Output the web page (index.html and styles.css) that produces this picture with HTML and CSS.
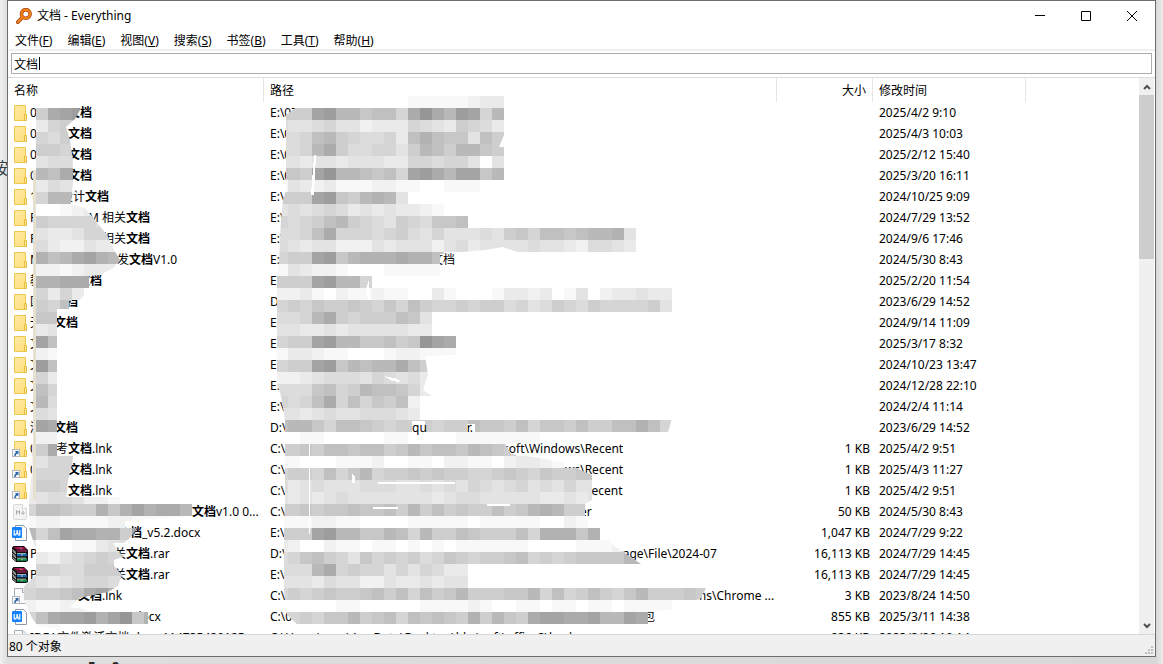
FILE: index.html
```html
<!DOCTYPE html>
<html lang="zh-CN">
<head>
<meta charset="utf-8">
<title>文档 - Everything</title>
<link rel="stylesheet" href="styles.css">
</head>
<body>
<div class="behind behind-side">按</div>
<div class="behind behind-foot">Everything</div>

<svg class="defs" aria-hidden="true">
  <defs>
    <linearGradient id="g-folder" x1="0" y1="0" x2="1" y2="1"><stop offset="0" stop-color="#ffeaa6"/><stop offset="1" stop-color="#ffdf7c"/></linearGradient>
    <symbol id="i-folder" viewBox="0 0 16 16">
      <path d="M2.500.5h11v15h-11z" fill="url(#g-folder)" stroke="#ecc84c"/>
      <path d="M12.500 15.500V9.500h2v6z" fill="#ffe699" stroke="#e6bd3d"/>
    </symbol>
    <symbol id="i-arrow" viewBox="0 0 16 16">
      <rect x=".5" y="8.500" width="7" height="7" fill="#f8fafc" stroke="#b4b8bc"/>
      <path d="M3 10h3.500v3.500L5.300 12.400Q3.800 13 3.600 15H2.200Q2 12.500 4 11.200z" fill="#2b66a8"/>
    </symbol>
    <symbol id="i-flink" viewBox="0 0 16 16"><use href="#i-folder"/><use href="#i-arrow"/></symbol>
    <symbol id="i-page" viewBox="0 0 16 16"><path d="M2.500.5h8.500l3.500 3.500v11.500h-12z" fill="#fbfbfc" stroke="#a8aeb8"/><path d="M10.500.5v4h4" fill="#eceef2" stroke="#a8aeb8"/></symbol>
    <symbol id="i-plink" viewBox="0 0 16 16"><use href="#i-page"/><use href="#i-arrow"/></symbol>
    <symbol id="i-md" viewBox="0 0 16 16">
      <path d="M2.500.5h8l4 4v10q0 1-1 1h-11q-1 0-1-1v-13q0-1 1-1z" fill="#f4f4f4" stroke="#d8d8d8"/><path d="M10.500.5v4h4" fill="#fff" stroke="#d8d8d8"/>
      <path d="M4.500 10.500v-4l1.500 2 1.500-2v4M11 6.500v3.500M9.500 8.500l1.500 2 1.500-2" fill="none" stroke="#aaa"/>
    </symbol>
    <symbol id="i-word" viewBox="0 0 16 16">
      <path d="M3.500.5h8l3 3v12h-11z" fill="#fff" stroke="#8a97ad"/><rect y="2" width="10" height="11" rx="1" fill="#1482ff"/>
      <path d="M2.200 5v4.800h1.500L5.500 7l.8 2.800h1.500V5M5 5v3" fill="none" stroke="#fff" stroke-width="1.200"/>
    </symbol>
    <symbol id="i-rar" viewBox="0 0 16 16">
      <path d="M0 1.500 1.500 0H12l4 4v11l-2 1H4L0 12.500z" fill="#101010"/>
      <path d="M1.500 1H12l2.500 2.500H4.500z" fill="#a3104f"/><path d="M5 4.500h10v1H5z" fill="#c8286e"/>
      <path d="M5 8h10v2.200H5z" fill="#1767b4"/><path d="M5 7h9v.8H5z" fill="#c4dcec"/>
      <path d="M5 12.700h10v2H5z" fill="#0a9c50"/><path d="M5 11.700h9v.8H5z" fill="#c8ecd6"/>
      <path d="M.5 3.500 4 6.500M.5 5l3.500 3M.5 7.500 4 10.500M.5 9l3.500 3M.5 11.500l3.500 3" stroke="#eee" stroke-width=".8"/>
      <path d="M7 1.500h2l2 2H9zM9 8h2v2H9zM9 12.700h2v1.500H9z" fill="#e9c9b0" opacity=".45"/>
    </symbol>
  </defs>
</svg>

<main class="window">
  <header class="titlebar">
    <svg class="logo" viewBox="0 0 16 16" aria-hidden="true">
      <path d="M6 9.800 1.800 14.200" stroke="#9c4310" stroke-width="3.800" stroke-linecap="round"/>
      <circle cx="9.800" cy="6" r="4.300" fill="none" stroke="#9c4310" stroke-width="3.600"/>
      <path d="M6 9.800 1.800 14.200" stroke="#f58220" stroke-width="2.200" stroke-linecap="round"/>
      <circle cx="9.800" cy="6" r="4.300" fill="none" stroke="#f97f10" stroke-width="2.300"/>
    </svg>
    <h1 class="title">文档 - Everything</h1>
    <div class="controls">
      <button type="button" aria-label="最小化"><svg viewBox="0 0 10 10"><path d="M0 4.500h10"/></svg></button>
      <button type="button" aria-label="最大化"><svg viewBox="0 0 10 10"><path d="M.5.5h9v9h-9z"/></svg></button>
      <button type="button" aria-label="关闭"><svg viewBox="0 0 10 10"><path d="M0 0l10 10M10 0L0 10"/></svg></button>
    </div>
  </header>
  <nav class="menu">
    <button type="button">文件(<u>F</u>)</button>
    <button type="button">编辑(<u>E</u>)</button>
    <button type="button">视图(<u>V</u>)</button>
    <button type="button">搜索(<u>S</u>)</button>
    <button type="button">书签(<u>B</u>)</button>
    <button type="button">工具(<u>T</u>)</button>
    <button type="button">帮助(<u>H</u>)</button>
  </nav>
  <div class="search">
    <input type="text" value="文档" aria-label="搜索">
    <span class="caret"></span>
  </div>
  <section class="results">
    <div class="list">
      <table class="files">
        <colgroup><col class="c-name"><col class="c-path"><col class="c-size"><col class="c-date"><col></colgroup>
        <thead><tr><th>名称</th><th>路径</th><th class="size">大小</th><th>修改时间</th><th class="rest"></th></tr></thead>
        <tbody id="rows"></tbody>
      </table>
    </div>
    <div class="scroll">
      <button type="button" aria-label="向上滚动"><svg viewBox="0 0 8 6"><path d="M1 5l3-3 3 3"/></svg></button>
      <div class="track"><div class="thumb"></div></div>
      <button type="button" aria-label="向下滚动"><svg viewBox="0 0 8 6"><path d="M1 1l3 3 3-3"/></svg></button>
    </div>
  </section>
  <footer class="status">
    <span>80 个对象</span>
    <svg class="grip" viewBox="0 0 8 8" aria-hidden="true"><path d="M6 0h2v2H6zM3 3h2v2H3zM6 3h2v2H6zM0 6h2v2H0zM3 6h2v2H3zM6 6h2v2H6z" fill="#bfbfbf"/></svg>
  </footer>
</main>
<svg class="mosaic" id="mosaic" width="720" height="634" aria-hidden="true">
  <defs>
    <clipPath id="clip-name"><polygon points="48,96 67,97 79,108 80,110 75,119 66,127 70,140 73,160 73,180 71,204 85,208 95,220 107,235 114,250 120,260 113,268 100,275 89,276 89,288 84,288 84,295 79,301 69,301 69,309 57,309 57,456 73,456 72,465 68,480 67,492 66,497 120,497 120,504 193,504 193,516 125,521 125,528 137,528 130,538 124,543 113,543 118,552 125,556 114,560 114,566 122,575 118,586 108,592 80,598 70,607 100,612 148,612 148,624 120,630 60,630 37,625 32,618 24,600 22,588 34,577 36,564 36,550 29,528 29,504 32,470 32,440 35,440 35,108 48,108"/></clipPath>
    <clipPath id="clip-path"><polygon points="295,108 408,108 408,96 504,96 504,135 499,147 504,147 504,180 490,183 480,192 480,204 444,204 444,216 468,216 468,228 636,228 636,252 517,252 503,247 485,250 440,254 440,276 680,276 680,318 432,318 432,336 456,336 456,355 425,356 428,375 423,390 432,396 432,410 672,410 671,422 668,432 600,440 505,444 511,454 540,458 565,463 592,475 592,500 585,504 585,520 600,528 613,545 625,553 641,564 468,564 468,588 706,588 701,598 684,608 648,612 648,624 640,627 300,627 287,615 284,590 284,528 285,500 285,420 281,396 277,384 277,275 279,262 280,240 281,220 283,200 286,190 286,115"/></clipPath>
  </defs>
</svg>
<script src="app.js"></script>
</body>
</html>
```

FILE: styles.css
```css
* { box-sizing: border-box; }

body {
  margin: 0;
  height: 100vh;
  padding: 0 7px 7px;
  display: flex;
  overflow: hidden;
  position: relative;
  background: linear-gradient(to right, #f0f0f0, #dedede 7px, #d8d8d8 calc(100% - 7px), #ececec);
  color: #000;
  font: 12px/20px "Noto Sans", "Noto Sans CJK SC", sans-serif;
}

button { border: 0; padding: 0; background: none; font: inherit; color: inherit; }

.defs { position: absolute; width: 0; height: 0; }

.behind { position: absolute; color: #2a2a2a; white-space: nowrap; }
.behind-side { left: -8px; top: 158px; font-size: 16px; color: #35404a; }
.behind-foot { left: -28px; top: 651px; font: bold 36px/50px "Open Sans", sans-serif; }

.window {
  flex: 1;
  min-width: 0;
  position: relative;
  display: flex;
  flex-direction: column;
  background: #fff;
  border: 1px solid #6d6d6d;
}

.titlebar { display: flex; align-items: center; height: 30px; padding-left: 8px; }
.logo { width: 16px; height: 16px; }
.title { flex: 1; margin: 0 0 0 5px; font-size: 12px; font-weight: 400; }
.controls { display: flex; height: 100%; }
.controls button { width: 46px; display: grid; place-items: center; }
.controls svg { width: 10px; height: 10px; fill: none; stroke: #000; }

.menu { display: flex; gap: 15px; height: 20px; padding: 0 7px; border-bottom: 2px solid #f0f0f0; }
.menu button { line-height: 20px; white-space: nowrap; }

.search { position: relative; padding: 2px 3px 3px; border-bottom: 1px solid #dcdcdc; }
.search input {
  display: block;
  width: 100%;
  height: 21px;
  padding: 0 2px;
  border: 1px solid #abadb3;
  border-radius: 0;
  font: inherit;
  color: inherit;
  outline: 0;
}
.caret { position: absolute; left: 31px; top: 6px; width: 1px; height: 13px; background: #000; }

.results { flex: 1; min-height: 0; display: flex; padding-right: 1px; }
.list { flex: 1; min-width: 0; overflow: hidden; }

.files { width: 100%; table-layout: fixed; border-collapse: separate; border-spacing: 0; }
.c-name { width: 256px; }
.c-path { width: 513px; }
.c-size { width: 96px; }
.c-date { width: 153px; }
.files th { height: 24px; padding: 2px 6px 0; text-align: left; font-weight: 400; border-right: 1px solid #e5e5e5; }
.files th.rest { border-right: 0; }
.files .size { text-align: right; }
.files td { height: 21px; padding: 0 3px 0 6px; white-space: nowrap; }
.files td.name { padding-left: 4px; }
.line { display: flex; align-items: center; height: 21px; }
.line svg { flex: none; width: 16px; height: 16px; margin-right: 2px; }
.head { flex: none; }
.raised { position: relative; z-index: 3; }
.far { margin-left: 40px; }

.scroll { width: 15px; display: flex; flex-direction: column; background: #f0f0f0; }
.scroll button { height: 17px; display: grid; place-items: center; }
.scroll svg { width: 8px; height: 6px; fill: none; stroke: #505050; stroke-width: 2; }
.track { flex: 1; }
.thumb { height: 31.400%; background: #cdcdcd; }

.status {
  display: flex;
  justify-content: space-between;
  align-items: center;
  height: 22px;
  padding: 0 2px 0 1px;
  background: #f0f0f0;
  border-top: 1px solid #d7d7d7;
}
.status span { padding-top: 2px; }
.grip { width: 8px; height: 8px; align-self: flex-end; margin-bottom: 2px; }

.mosaic { position: absolute; left: 0; top: 0; z-index: 2; pointer-events: none; shape-rendering: crispEdges; }
```

FILE: app.js
```js
// icon, name start, tail offset, name tail, path start, tail offset, path tail, size, date
const files = [
  ['folder', '0', 38, '*文档*', 'E:\\07', 0, '', '', '2025/4/2 9:10'],
  ['folder', '0', 38, '*文档*', 'E:\\0', 0, '', '', '2025/4/3 10:03'],
  ['folder', '0', 38, '*文档*', 'E:\\0', 0, '', '', '2025/2/12 15:40'],
  ['folder', '0', 38, '*文档*', 'E:\\0', 0, '', '', '2025/3/20 16:11'],
  ['folder', '1', 31, '设计*文档*', 'E:\\', 0, '', '', '2024/10/25 9:09'],
  ['folder', 'P', 58, 'M 相关*文档*', 'E:\\', 0, '', '', '2024/7/29 13:52'],
  ['folder', 'P', 72, '相关*文档*', 'E:\\', 0, '', '', '2024/9/6 17:46'],
  ['folder', 'M', 87, '发*文档*V1.0', 'E:\\', 161, '文档', '', '2024/5/30 8:43'],
  ['folder', '教', 48, '*文档*', 'E:\\', 0, '', '', '2025/2/20 11:54'],
  ['folder', '国', 24, '*文档*', 'D:\\', 0, '', '', '2023/6/29 14:52'],
  ['folder', '无', 24, '*文档*', 'E:\\', 0, '', '', '2024/9/14 11:09'],
  ['folder', '文', 0, '', 'E:\\', 0, '', '', '2025/3/17 8:32'],
  ['folder', '文', 0, '', 'E:\\', 144, '品', '', '2024/10/23 13:47'],
  ['folder', '文', 0, '', 'E:\\', 0, '', '', '2024/12/28 22:10'],
  ['folder', '文', 0, '', 'E:\\', 0, '', '', '2024/2/4 11:14'],
  ['folder', '测', 24, '*文档*', 'D:\\', 142, '^qu<span class="far">r.</span>', '', '2023/6/29 14:52'],
  ['flink', '0', 26, '考*文档*.lnk', 'C:\\', 233, 'soft\\Windows\\Recent', '1 KB', '2025/4/2 9:51'],
  ['flink', '0', 38, '*文档*.lnk', 'C:\\', 295, 'ws\\Recent', '1 KB', '2025/4/3 11:27'],
  ['flink', '', 38, '*文档*.lnk', 'C:\\', 314, 'Recent', '1 KB', '2025/4/2 9:51'],
  ['md', '', 162, '*文档*v1.0 0...', 'C:\\', 310, 'er', '50 KB', '2024/5/30 8:43'],
  ['word', '', 88, '*文档*_v5.2.docx', 'E:\\', 0, '', '1,047 KB', '2024/7/29 9:22'],
  ['rar', 'P', 84, '关*文档*.rar', 'D:\\', 348, 'rage\\File\\2024-07', '16,113 KB', '2024/7/29 14:45'],
  ['rar', 'P', 84, '关*文档*.rar', 'E:\\', 0, '', '16,113 KB', '2024/7/29 14:45'],
  ['plink', '', 48, '*文档*.lnk', 'C:\\', 425, 'ms\\Chrome ...', '3 KB', '2023/8/24 14:50'],
  ['word', '', 101, '.docx', 'C:\\0', 373, '包', '855 KB', '2025/3/11 14:38'],
  ['page', 'IDEA文件激活文档.docx 114735429125', 0, '', 'C:\\Users\\user\\AppData\\Desktop\\bbs\\soft\\office2\\backup', 0, '', '836 KB', '2023/2/26 10:14']
];

const parts = (head, offset, tail) => {
  const width = offset ? ` style="width:${offset}px"` : '';
  const raised = tail[0] === '^' ? ' class="raised"' : '';
  const text = tail.replace('^', '').replace(/\*(.+?)\*/g, '<b>$1</b>');
  return `<span class="head"${width}>${head}</span><span${raised}>${text}</span>`;
};

document.getElementById('rows').innerHTML = files.map(f =>
  `<tr><td class="name"><div class="line"><svg aria-hidden="true"><use href="#i-${f[0]}"/></svg>${parts(f[1], f[2], f[3])}</div></td>` +
  `<td><div class="line">${parts(f[4], f[5], f[6])}</div></td><td class="size">${f[7]}</td><td>${f[8]}</td><td></td></tr>`
).join('');

// Redaction blocks: 12px cells, one hex digit per cell from dark (0) to white (f)
const nameCells = [
  [96, 48, 'fff'], [108, 36, '8321'], [120, 36, 'c987'], [132, 36, '9a88'], [144, 36, '8899'], [156, 36, 'baab'],
  [168, 36, '5632'], [180, 36, 'caba'], [192, 36, '955'], [204, 36, 'ffedcc'], [216, 36, '89999a'], [228, 36, 'bccb999'],
  [240, 36, 'acddbcc'], [252, 36, '4653245'], [264, 36, 'ddedccc'], [276, 36, '44333'], [288, 36, '9c9c'], [300, 36, '896'],
  [312, 36, '77'], [324, 36, 'cb'], [336, 36, '26'], [348, 36, 'de'], [360, 36, '16'], [372, 36, '9c'], [384, 36, '69'],
  [396, 36, '5a'], [408, 36, 'ab'], [420, 36, '23'], [432, 36, 'dd'], [444, 24, 'b83'], [456, 24, 'db998'], [468, 24, 'c9998'],
  [480, 24, 'c8898'], [492, 24, 'cbaabddee'], [504, 24, '96678847424335'], [516, 24, 'eddeeeeddeeeee'], [528, 24, '5962334482'],
  [540, 24, 'cfffeecba'], [552, 24, 'ccdba9898'], [564, 36, '99aa8888'], [576, 24, 'abcba99a8'], [588, 24, '98876324'],
  [600, 24, 'deeddeeef'], [612, 24, '96322142074'], [624, 24, 'deeffffff']
];
const pathCells = [
  [96, 408, 'eeeeedcce'], [108, 276, '8882155766930351295'], [120, 276, 'abba9bbdccc9abc89ac'],
  [132, 276, 'aa96589aa9c64677b68'], [144, 276, 'aa9538aa99b85685578'], [156, 276, 'bbcbbcbbbcc99a99bfb'],
  [168, 276, '7782055676921352275'], [180, 276, 'ebcdceeeddeeffeee'], [192, 276, '8882178545b'], [204, 276, 'baba9acbcbccde'],
  [216, 276, '9a986589ab89a7769'], [228, 276, 'aa963999a98ab9bbbab8796676554b'], [240, 276, 'abcbbdddbcbbbdbacbbbbabbcdaabc'],
  [252, 276, '98821754443446'], [264, 276, 'ebcddefffeeeee'], [276, 276, '88821559'],
  [288, 276, 'ddcefdeedeeffcefffeccdcfebfdccbcc'], [300, 276, '9897887897968998988a9ba89a899998b'],
  [312, 276, 'aa9538988867b'], [324, 276, 'bbccbcbbbbbcc'], [336, 276, '988215577687023'], [348, 276, 'eccdeefffeddeee'],
  [360, 276, '9882175655368'], [372, 276, 'ddcbaaab9abac'], [384, 276, 'aaa769856679c'], [396, 276, '9a963969786d'],
  [408, 276, 'bbcbabbaaabc'], [420, 276, '655796678988898867786977868866469'], [432, 276, 'ffeefffffeeffffeeeeeeefff'],
  [444, 276, '88786676687576675678'], [456, 276, 'eefffeeedffeefddeefdccde'], [468, 276, '988969759887878899878978877'],
  [480, 276, 'acbabbbaaabbabab9aba9bab9bb'], [492, 276, 'bcbcbabbbbbbbcbaabbbbbccbcb'], [504, 276, '88787767768586878868754588'],
  [516, 276, 'eeeddeeffffeeeeefeeeeeffde'], [528, 276, '888215577569588678886944474'],
  [540, 276, 'cdffdeefeefefefeeeeeeffffeeed'], [552, 276, 'a97689b79898a978988769898777755'],
  [564, 276, 'aaa539899b9b9acc'], [576, 276, 'bbbcabbddbccbcbb'], [588, 276, '989878876869687588877596986897588878'],
  [600, 276, 'fffffeefffffeeeedeffeefeefeefeeee'], [612, 276, '9989775876967678485783223325523']
];
const cells = (rows, clip) => `<g clip-path="url(#${clip})">` + rows.map(([y, x, s]) => [...s].map((c, i) => {
  const v = 150 + parseInt(c, 16) * 7;
  return `<rect x="${x + i * 12}" y="${y}" width="12" height="12" fill="rgb(${v},${v},${v})"/>`;
}).join('')).join('') + '</g>';

document.getElementById('mosaic').insertAdjacentHTML('beforeend',
  cells(nameCells, 'clip-name') + cells(pathCells, 'clip-path') +
  '<path d="M33 170h3v330h-3z" fill="#e6e0d0"/>' +
  '<path d="M314 155h2l-2 40h-3zM309 444h1v90h-1zM378 482h77v2h-77zM352 474l3 3v6h-3zM384 376l14 3 2 3-8-1zM366 288l3-8 1 20h-2zM487 504h23v2h-23zM412 421h13v11h-13zM373 507h25v2h-25zM467 424h8v8h-8z" fill="#fff"/>');
```
